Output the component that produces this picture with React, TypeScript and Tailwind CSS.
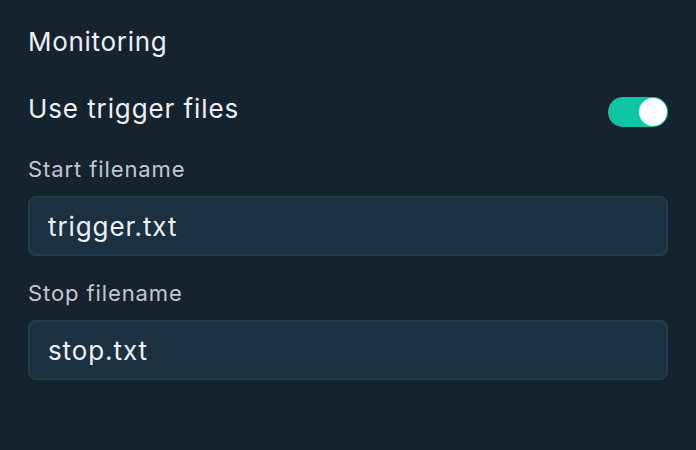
import React, { useState } from "react";

const font = { fontFamily: "Inter, 'Noto Sans', sans-serif" };

function Field({ label, value }: { label: string; value: string }) {
  return (
    <div className="flex flex-col">
      <label className="text-[22px] leading-[28px] tracking-[0.9px] text-[#c3c7cb]">{label}</label>
      <input
        defaultValue={value}
        className="mt-[13px] h-[60px] w-full rounded-[8px] border-2 border-[#243e4f] bg-[#1b3041] px-[18px] text-[26px] tracking-[0.9px] text-[#eef0f1] outline-none"
      />
    </div>
  );
}

export default function App() {
  const [on, setOn] = useState(true);

  return (
    <div style={font} className="h-[450px] w-[696px] bg-[#15232f] px-[28px] pt-[25px]">
      <h2 className="text-[26px] leading-[34px] tracking-[0.7px] text-[#eef0f1]">Monitoring</h2>

      <div className="mt-[33px] flex items-start justify-between">
        <span className="text-[26px] leading-[34px] tracking-[0.9px] text-[#eef0f1]">Use trigger files</span>
        <button
          onClick={() => setOn(!on)}
          className={`mt-[5px] flex h-[30px] w-[60px] items-center rounded-full p-[1px] ${
            on ? "justify-end bg-[#0dc6a5]" : "justify-start bg-[#3a4b58]"
          }`}
        >
          <span className="h-[28px] w-[28px] rounded-full bg-white" />
        </button>
      </div>

      <div className="mt-[28px] flex flex-col gap-[23px]">
        <Field label="Start filename" value="trigger.txt" />
        <Field label="Stop filename" value="stop.txt" />
      </div>
    </div>
  );
}
